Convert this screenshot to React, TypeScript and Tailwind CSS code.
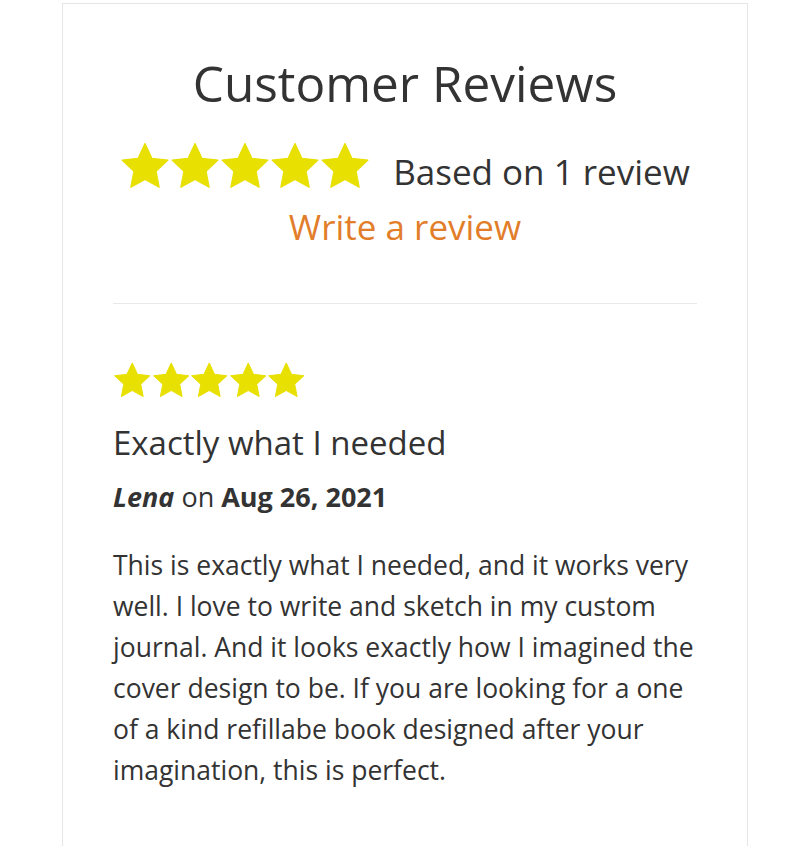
import React from 'react';

function Star({ size }: { size: number }) {
  return (
    <svg width={size} height={size} viewBox="0 0 24 24" className="shrink-0">
      <path
        fill="#e8e000"
        stroke="#e8e000"
        strokeWidth="0.6"
        strokeLinejoin="round"
        d="M12 1.2l3.3 7.1 7.7.9-5.7 5.3 1.5 7.7L12 18.4l-6.8 3.8 1.5-7.7L1 9.2l7.7-.9z"
      />
    </svg>
  );
}

function Stars({ size }: { size: number }) {
  return (
    <div className="flex shrink-0">
      {[0, 1, 2, 3, 4].map((i) => (
        <Star key={i} size={size} />
      ))}
    </div>
  );
}

export default function App() {
  return (
    <div className="min-h-[846px] bg-white pt-[3px] text-[#333]" style={{ fontFamily: '"Open Sans", sans-serif' }}>
      <div className="mx-[62px] min-h-[843px] border border-b-0 border-[#e6e6e6] px-[50px]">
        <h2 className="pt-[49px] text-center text-[49.5px] leading-[60px] font-normal">Customer Reviews</h2>
        <div className="mt-[28px] flex items-start justify-center gap-[23px]">
          <Stars size={50} />
          <span className="mt-[11px] text-[35px] leading-[40px]">Based on 1 review</span>
        </div>
        <div className="mt-[15px] text-center">
          <a className="text-[35px] leading-[40px] text-[#e27d2a]">Write a review</a>
        </div>
        <div className="mt-[56px] border-t border-[#e8e8e8]" />
        <div className="pt-[57px]">
          <Stars size={38.5} />
          <h3 className="mt-[23px] text-[33px] leading-[40px]">Exactly what I needed</h3>
          <p className="mt-[18px] text-[27px] leading-[32px]">
            <strong className="italic">Lena</strong> on <strong>Aug 26, 2021</strong>
          </p>
          <p className="mt-[32px] text-[26.5px] leading-[41px]">
            This is exactly what I needed, and it works very well. I love to write and sketch in my custom journal. And it
            looks exactly how I imagined the cover design to be. If you are looking for a one of a kind refillabe book
            designed after your imagination, this is perfect.
          </p>
        </div>
      </div>
    </div>
  );
}
